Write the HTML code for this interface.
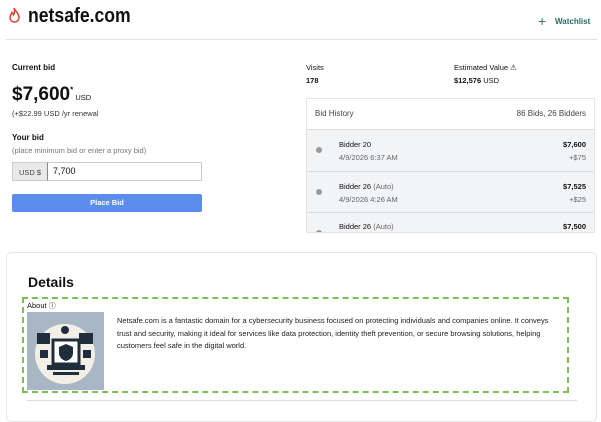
<!DOCTYPE html>
<html><head><meta charset="utf-8"><style>
*{margin:0;padding:0;box-sizing:border-box}
body{width:601px;height:408px;overflow:hidden;background:#fff;font-family:"Liberation Sans",sans-serif;color:#111;position:relative}
.a{position:absolute;white-space:nowrap}
</style></head><body>
<svg class="a" style="left:8px;top:7px" width="13" height="16" viewBox="0 0 13 16"><path d="M6 1C7 4 11 6 11 10.5A4.5 4.5 0 0 1 2 10.5C2 8 3.5 7 4 5.5C5 7 5.5 8 5.5 8C6.5 6 7 4 6 1Z" fill="none" stroke="#d9442f" stroke-width="1.5"/></svg>
<div class="a" style="left:28px;top:5px;font-size:20px;font-weight:bold;transform:scaleX(0.88);transform-origin:0 0">netsafe.com</div>
<div class="a" style="left:538px;top:13px;font-size:14px;color:#2a7a70">+</div>
<div class="a" style="left:555px;top:17px;font-size:8px;font-weight:bold;color:#2a6a66">Watchlist</div>
<div class="a" style="left:6px;top:39px;width:591px;height:1px;background:#e2e2e2"></div>

<div class="a" style="left:12px;top:63px;font-size:8px;font-weight:bold">Current bid</div>
<div class="a" style="left:12px;top:84px;font-size:19px;font-weight:bold">$7,600<sup style="font-size:8px">*</sup><span style="font-size:7.5px;font-weight:normal"> USD</span></div>
<div class="a" style="left:12px;top:109px;font-size:7.5px;color:#333">(+$22.99 USD /yr renewal</div>
<div class="a" style="left:12px;top:133px;font-size:8px;font-weight:bold">Your bid</div>
<div class="a" style="left:12px;top:146px;font-size:7.5px;color:#777">(place minimum bid or enter a proxy bid)</div>
<div class="a" style="left:12px;top:162px;width:190px;height:19px;border:1px solid #ccc;background:#fff"></div>
<div class="a" style="left:12px;top:162px;width:36px;height:19px;background:#e9e9ea;border:1px solid #ccc;border-right:1px solid #888;font-size:7.5px;color:#444;padding:5px 0 0 6px">USD $</div>
<div class="a" style="left:53px;top:166px;font-size:9px">7,700</div>
<div class="a" style="left:12px;top:194px;width:190px;height:18px;background:#5b8def;border-radius:2px;color:#fff;font-size:7.5px;font-weight:bold;text-align:center;line-height:18px">Place Bid</div>

<div class="a" style="left:306px;top:63px;font-size:7.5px">Visits</div>
<div class="a" style="left:306px;top:76px;font-size:7.5px;font-weight:bold">178</div>
<div class="a" style="left:454px;top:63px;font-size:7.5px">Estimated Value ⚠</div>
<div class="a" style="left:454px;top:76px;font-size:7.5px"><b>$12,576</b> USD</div>

<div class="a" style="left:306px;top:98px;width:289px;height:135px;border:1px solid #e4e4e4;overflow:hidden">
 <div style="height:31px;border-bottom:1px solid #ddd;font-size:8px;color:#444;padding:10px 8px;display:flex;justify-content:space-between"><span>Bid History</span><span>86 Bids, 26 Bidders</span></div>
 <div style="height:42px;background:#f3f4f6;border-bottom:1px solid #ddd;position:relative">
  <div class="a" style="left:9px;top:17px;width:6px;height:6px;border-radius:50%;background:#9a9a9a"></div>
  <div class="a" style="left:32px;top:10px;font-size:7.5px">Bidder 20</div>
  <div class="a" style="left:32px;top:23px;font-size:7.5px;color:#666">4/9/2026 6:37 AM</div>
  <div class="a" style="right:8px;top:10px;font-size:7.5px;font-weight:bold">$7,600</div>
  <div class="a" style="right:8px;top:23px;font-size:7.5px;color:#666">+$75</div>
 </div>
 <div style="height:41px;background:#f3f4f6;border-bottom:1px solid #ddd;position:relative">
  <div class="a" style="left:9px;top:17px;width:6px;height:6px;border-radius:50%;background:#9a9a9a"></div>
  <div class="a" style="left:32px;top:10px;font-size:7.5px">Bidder 26 <span style="color:#666">(Auto)</span></div>
  <div class="a" style="left:32px;top:23px;font-size:7.5px;color:#666">4/9/2026 4:26 AM</div>
  <div class="a" style="right:8px;top:10px;font-size:7.5px;font-weight:bold">$7,525</div>
  <div class="a" style="right:8px;top:23px;font-size:7.5px;color:#666">+$25</div>
 </div>
 <div style="height:40px;background:#f3f4f6;position:relative">
  <div class="a" style="left:9px;top:17px;width:6px;height:6px;border-radius:50%;background:#9a9a9a"></div>
  <div class="a" style="left:32px;top:9px;font-size:7.5px">Bidder 26 <span style="color:#666">(Auto)</span></div>
  <div class="a" style="right:8px;top:9px;font-size:7.5px;font-weight:bold">$7,500</div>
 </div>
</div>

<div class="a" style="left:6px;top:252px;width:591px;height:170px;border:1px solid #e6e6e6;border-radius:5px"></div>
<div class="a" style="left:28px;top:274px;font-size:14px;font-weight:bold">Details</div>
<div class="a" style="left:22px;top:297px;width:547px;height:96px;border:2px dashed #79c153"></div>
<div class="a" style="left:27px;top:301px;font-size:7.5px">About <span style="font-size:7px">ⓘ</span></div>
<div class="a" style="left:27px;top:312px;width:77px;height:78px;background:#a9b7c4">
<svg width="77" height="78" viewBox="0 0 77 78"><circle cx="38" cy="42" r="30" fill="#f2efe6"/><rect x="10" y="21" width="13" height="11" fill="#1f2d3d"/><rect x="52" y="21" width="14" height="11" fill="#1f2d3d"/><circle cx="38" cy="18" r="4" fill="#1f2d3d"/><rect x="26" y="28" width="26" height="24" fill="#fff" stroke="#1f2d3d" stroke-width="3"/><path d="M39 32l7 3v6c0 4-3 7-7 8c-4-1-7-4-7-8v-6z" fill="#1f2d3d"/><rect x="20" y="53" width="38" height="5" fill="#1f2d3d"/><rect x="26" y="60" width="26" height="3" fill="#1f2d3d"/><rect x="13" y="38" width="8" height="8" fill="#1f2d3d"/><rect x="56" y="38" width="8" height="8" fill="#1f2d3d"/></svg></div>
<div class="a" style="left:117px;top:315px;width:445px;white-space:normal;font-size:7.5px;line-height:12.5px;color:#222">Netsafe.com is a fantastic domain for a cybersecurity business focused on protecting individuals and companies online. It conveys trust and security, making it ideal for services like data protection, identity theft prevention, or secure browsing solutions, helping customers feel safe in the digital world.</div>
<div class="a" style="left:27px;top:400px;width:550px;height:1px;background:#ddd"></div>
</body></html>
